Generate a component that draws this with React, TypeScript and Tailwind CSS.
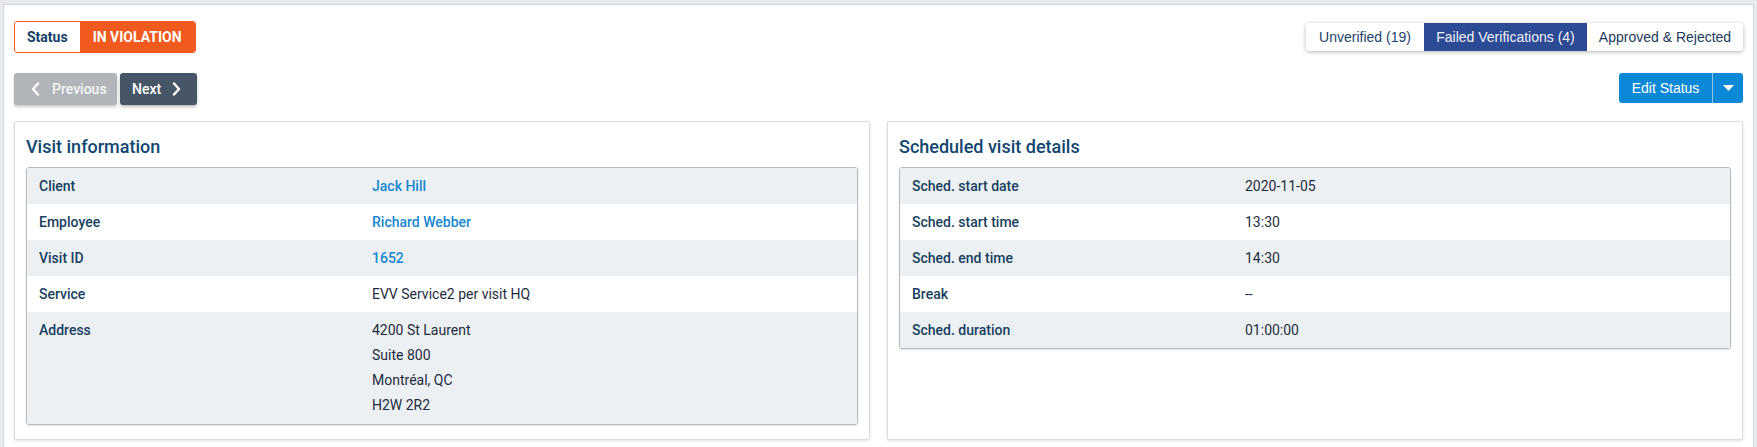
import React from 'react';

type Row = { label: string; lines: string[]; link?: boolean };

const visitRows: Row[] = [
  { label: 'Client', lines: ['Jack Hill'], link: true },
  { label: 'Employee', lines: ['Richard Webber'], link: true },
  { label: 'Visit ID', lines: ['1652'], link: true },
  { label: 'Service', lines: ['EVV Service2 per visit HQ'] },
  { label: 'Address', lines: ['4200 St Laurent', 'Suite 800', 'Montréal, QC', 'H2W 2R2'] },
];

const scheduleRows: Row[] = [
  { label: 'Sched. start date', lines: ['2020-11-05'] },
  { label: 'Sched. start time', lines: ['13:30'] },
  { label: 'Sched. end time', lines: ['14:30'] },
  { label: 'Break', lines: ['--'] },
  { label: 'Sched. duration', lines: ['01:00:00'] },
];

const Chevron: React.FC<{ dir: 'left' | 'right' }> = ({ dir }) => (
  <svg width="9" height="14" viewBox="0 0 9 14" fill="none">
    <path
      d={dir === 'left' ? 'M7 1.5 L2 7 L7 12.5' : 'M2 1.5 L7 7 L2 12.5'}
      stroke="white"
      strokeWidth="2.4"
      strokeLinecap="round"
      strokeLinejoin="round"
    />
  </svg>
);

const InfoCard: React.FC<{ title: string; rows: Row[] }> = ({ title, rows }) => (
  <div className="bg-white border border-[#dadde0] rounded-[2px] shadow-[0_1px_3px_rgba(0,0,0,0.12)] px-[11px] pt-[13px] pb-[14px]">
    <h2 className="text-[18px] leading-[24px] font-medium text-[#0f4770] mb-[8px]">{title}</h2>
    <div className="border border-[#b6bbc0] rounded-[3px] overflow-hidden shadow-[0_1px_2px_rgba(0,0,0,0.12)]">
      {rows.map((r, i) => (
        <div key={r.label} className={`flex py-[6px] ${i % 2 === 0 ? 'bg-[#edf0f3]' : 'bg-white'}`}>
          <div className="w-[345px] shrink-0 pl-[12px] text-[14px] leading-[24px] font-medium text-[#173f60]">
            {r.label}
          </div>
          <div className={`flex flex-col text-[14px] ${r.lines.length > 1 ? 'leading-[25px]' : 'leading-[24px]'} ${r.link ? 'font-medium text-[#1787d0]' : 'text-[#1f2b40]'}`}>
            {r.lines.map(l => (
              <span key={l}>{l}</span>
            ))}
          </div>
        </div>
      ))}
    </div>
  </div>
);

export default function App() {
  return (
    <div className="h-[447px] overflow-hidden bg-[#e8ebee] pt-[4px] px-[3px]" style={{ fontFamily: 'Roboto, "Liberation Sans", sans-serif' }}>
      <div className="bg-white border border-[#d3d7db] px-[10px] pt-[16px] pb-[10px]">
        <div className="flex justify-between items-start">
          <div className="flex h-[32px] border border-[#f05a1e] rounded-[3px] overflow-hidden text-[14px] font-bold">
            <div className="flex items-center px-[12px] text-[#133f66] bg-white">Status</div>
            <div className="flex items-center px-[13px] text-white bg-[#f05a1e] uppercase">In Violation</div>
          </div>
          <div
            className="flex mt-[2px] h-[28px] rounded-[4px] overflow-hidden shadow-[0_1px_4px_rgba(0,0,0,0.3)] text-[14px]"
            style={{ fontFamily: '"Liberation Sans", Arial, sans-serif' }}
          >
            <div className="flex items-center w-[118px] justify-center bg-white text-[#1c4468]">Unverified (19)</div>
            <div className="flex items-center w-[163px] justify-center bg-[#2d4a95] text-[#eef1f8]">Failed Verifications (4)</div>
            <div className="flex items-center w-[156px] justify-center bg-white text-[#1c3b5c]">Approved &amp; Rejected</div>
          </div>
        </div>

        <div className="flex justify-between items-start mt-[20px]">
          <div className="flex gap-[3px] text-[14px] font-medium">
            <button className="flex items-center gap-[12px] h-[32px] w-[103px] pl-[17px] bg-[#b1b5b9] text-[#f4f5f6] rounded-[3px] shadow-[0_2px_3px_rgba(0,0,0,0.22)]">
              <Chevron dir="left" />
              Previous
            </button>
            <button className="flex items-center gap-[11px] h-[32px] w-[77px] pl-[12px] bg-[#465667] text-white rounded-[3px] shadow-[0_2px_3px_rgba(0,0,0,0.25)]">
              Next
              <Chevron dir="right" />
            </button>
          </div>
          <div
            className="flex h-[30px] rounded-[3px] overflow-hidden bg-[#0b88d8] text-white text-[14px]"
            style={{ fontFamily: '"Liberation Sans", Arial, sans-serif' }}
          >
            <div className="flex items-center w-[93px] justify-center">Edit Status</div>
            <div className="w-px bg-[#8cc6ec]" />
            <div className="flex items-center justify-center w-[30px]">
              <svg width="11" height="6" viewBox="0 0 11 6">
                <path d="M0 0 H11 L5.5 6 Z" fill="white" />
              </svg>
            </div>
          </div>
        </div>

        <div className="grid grid-cols-2 gap-[17px] mt-[16px]">
          <InfoCard title="Visit information" rows={visitRows} />
          <InfoCard title="Scheduled visit details" rows={scheduleRows} />
        </div>
      </div>
    </div>
  );
}
